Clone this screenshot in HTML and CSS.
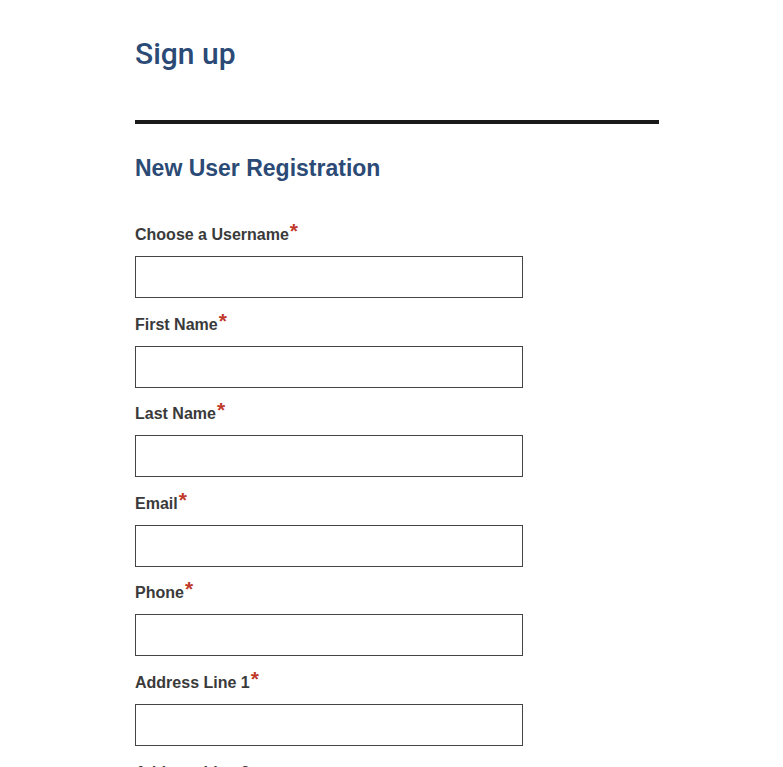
FILE: index.html
```html
<!DOCTYPE html>
<html lang="en">
<head>
  <meta charset="UTF-8">
  <meta name="viewport" content="width=device-width, initial-scale=1.0">
  <title>Sign up</title>
  <link rel="stylesheet" href="styles.css">
</head>
<body>
  <div class="container">
    <h1 class="page-title">Sign up</h1>
    <hr class="divider">
    <h2 class="form-title">New User Registration</h2>
    <form id="register-form" class="register-form">
      <div class="field">
        <label for="username">Choose a Username<span class="req">*</span></label>
        <input type="text" id="username" name="username">
      </div>
      <div class="field">
        <label for="first-name">First Name<span class="req">*</span></label>
        <input type="text" id="first-name" name="first_name">
      </div>
      <div class="field">
        <label for="last-name">Last Name<span class="req">*</span></label>
        <input type="text" id="last-name" name="last_name">
      </div>
      <div class="field">
        <label for="email">Email<span class="req">*</span></label>
        <input type="text" id="email" name="email">
      </div>
      <div class="field">
        <label for="phone">Phone<span class="req">*</span></label>
        <input type="text" id="phone" name="phone">
      </div>
      <div class="field">
        <label for="address1">Address Line 1<span class="req">*</span></label>
        <input type="text" id="address1" name="address1">
      </div>
      <div class="field">
        <label for="address2">Address Line 2</label>
        <input type="text" id="address2" name="address2">
      </div>
    </form>
  </div>
</body>
</html>
```

FILE: styles.css
```css
body {
  font-family: "Liberation Sans", Arial, sans-serif;
  margin: 0;
  padding: 0;
  background-color: #fff;
  color: #333;
}

.container {
  width: 524px;
  margin-left: 135px;
  padding-top: 34px;
}

.page-title {
  font-family: Roboto, "Liberation Sans", sans-serif;
  font-size: 30px;
  font-weight: 500;
  color: #2b4a75;
  margin: 0;
  line-height: 40px;
}

.divider {
  border: none;
  height: 4px;
  background-color: #1a1a1a;
  margin: 46px 0 0;
}

.form-title {
  font-size: 23px;
  font-weight: bold;
  color: #2b4a75;
  margin: 30px 0 0;
  line-height: 28px;
}

.register-form {
  display: flex;
  flex-direction: column;
  gap: 16.6px;
  margin-top: 43px;
}

.field {
  display: flex;
  flex-direction: column;
}

label {
  font-size: 16px;
  font-weight: bold;
  color: #3a3a3a;
  line-height: 20px;
  margin-bottom: 11px;
}

.req {
  color: #c0392b;
  font-size: 21px;
  line-height: 0;
  position: relative;
  top: -2px;
  margin-left: 1px;
}

input[type="text"] {
  width: 388px;
  height: 42px;
  box-sizing: border-box;
  border: 1px solid #444;
  border-radius: 0;
  padding: 8px;
  font-size: 16px;
  margin: 0;
}
```
